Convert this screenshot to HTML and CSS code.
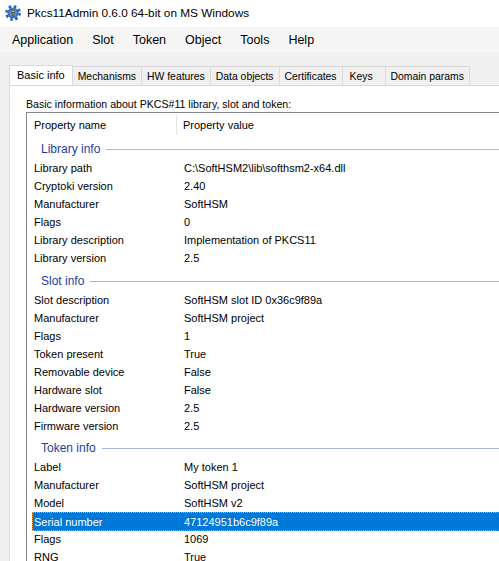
FILE: index.html
```html
<!DOCTYPE html>
<html>
<head>
<meta charset="utf-8">
<title>Pkcs11Admin</title>
<link rel="stylesheet" href="styles.css">
</head>
<body>
<div class="window">
  <div class="titlebar">
    <svg class="app-icon" width="16" height="16" viewBox="0 0 16 16">
      <circle cx="8" cy="8" r="6.4" fill="none" stroke="#2d5fae" stroke-width="3" stroke-dasharray="2.5 2.53"/>
      <circle cx="8" cy="8" r="5.6" fill="#3f74c4"/>
      <circle cx="8" cy="8" r="3.6" fill="#5b8ad6"/>
      <circle cx="8" cy="6.9" r="1.7" fill="#f3d21c" stroke="#222" stroke-width="0.5"/>
      <rect x="7.2" y="7.2" width="1.6" height="3.8" fill="#f3d21c" stroke="#222" stroke-width="0.5"/>
    </svg>
    <span class="title">Pkcs11Admin 0.6.0 64-bit on MS Windows</span>
  </div>
  <div class="menubar">
    <span class="menu-item">Application</span>
    <span class="menu-item">Slot</span>
    <span class="menu-item">Token</span>
    <span class="menu-item">Object</span>
    <span class="menu-item">Tools</span>
    <span class="menu-item">Help</span>
  </div>
  <div class="tabstrip">
    <div class="tab active">Basic info</div>
    <div class="tab">Mechanisms</div>
    <div class="tab">HW features</div>
    <div class="tab">Data objects</div>
    <div class="tab">Certificates</div>
    <div class="tab tab-narrow">Keys</div>
    <div class="tab">Domain params</div>
  </div>
  <div class="page">
    <div class="caption">Basic information about PKCS#11 library, slot and token:</div>
    <div class="listview">
      <div class="lv-header">
        <div class="hcol1">Property name</div>
        <div class="hcol2">Property value</div>
      </div>

      <div class="group"><span class="group-name">Library info</span><span class="group-line"></span></div>
      <div class="row"><span class="c1">Library path</span><span class="c2">C:\SoftHSM2\lib\softhsm2-x64.dll</span></div>
      <div class="row"><span class="c1">Cryptoki version</span><span class="c2">2.40</span></div>
      <div class="row"><span class="c1">Manufacturer</span><span class="c2">SoftHSM</span></div>
      <div class="row"><span class="c1">Flags</span><span class="c2">0</span></div>
      <div class="row"><span class="c1">Library description</span><span class="c2">Implementation of PKCS11</span></div>
      <div class="row"><span class="c1">Library version</span><span class="c2">2.5</span></div>

      <div class="group group-mid"><span class="group-name">Slot info</span><span class="group-line"></span></div>
      <div class="row"><span class="c1">Slot description</span><span class="c2">SoftHSM slot ID 0x36c9f89a</span></div>
      <div class="row"><span class="c1">Manufacturer</span><span class="c2">SoftHSM project</span></div>
      <div class="row"><span class="c1">Flags</span><span class="c2">1</span></div>
      <div class="row"><span class="c1">Token present</span><span class="c2">True</span></div>
      <div class="row"><span class="c1">Removable device</span><span class="c2">False</span></div>
      <div class="row"><span class="c1">Hardware slot</span><span class="c2">False</span></div>
      <div class="row"><span class="c1">Hardware version</span><span class="c2">2.5</span></div>
      <div class="row"><span class="c1">Firmware version</span><span class="c2">2.5</span></div>

      <div class="group"><span class="group-name">Token info</span><span class="group-line"></span></div>
      <div class="row"><span class="c1">Label</span><span class="c2">My token 1</span></div>
      <div class="row"><span class="c1">Manufacturer</span><span class="c2">SoftHSM project</span></div>
      <div class="row"><span class="c1">Model</span><span class="c2">SoftHSM v2</span></div>
      <div class="row selected"><span class="c1">Serial number</span><span class="c2">47124951b6c9f89a</span></div>
      <div class="row"><span class="c1">Flags</span><span class="c2">1069</span></div>
      <div class="row"><span class="c1">RNG</span><span class="c2">True</span></div>
    </div>
  </div>
</div>
</body>
</html>
```

FILE: styles.css
```css
html, body {
  margin: 0;
  padding: 0;
  width: 499px;
  height: 561px;
  overflow: hidden;
  background: #f0f0f0;
}

.window {
  width: 560px;
  height: 561px;
  display: flex;
  flex-direction: column;
  font-family: "Liberation Sans", Arial, sans-serif;
  color: #000;
}

.titlebar {
  height: 27px;
  flex: none;
  background: #fff;
  display: flex;
  align-items: center;
  padding-left: 5px;
  gap: 6px;
}

.app-icon {
  flex: none;
  margin-top: -1px;
}

.title {
  font-size: 11.8px;
  margin-top: -1px;
}

.menubar {
  height: 25px;
  flex: none;
  background: #f5f5f5;
  display: flex;
  align-items: center;
  padding-left: 3px;
  font-size: 12.5px;
}

.menu-item {
  padding: 0 9px 0 9px;
  margin-right: 1px;
}

.tabstrip {
  flex: none;
  display: flex;
  align-items: flex-end;
  padding: 13px 0 0 9px;
  font-size: 10.4px;
}

.tab {
  height: 18px;
  line-height: 19px;
  padding: 0 5px;
  border: 1px solid #d9d9d9;
  border-bottom: none;
  border-left: none;
  background: #f0f0f0;
  white-space: nowrap;
}

.tab-narrow {
  min-width: 29px;
  padding: 0 6px 0 7px;
}

.tab.active {
  height: 20px;
  line-height: 18px;
  background: #fff;
  border-left: 1px solid #d9d9d9;
  padding: 0 7px 0 7px;
  margin-bottom: -1px;
  font-size: 11px;
}

.page {
  flex: 1;
  margin-left: 9px;
  background: #fff;
  border-top: 1px solid #d9d9d9;
  border-left: 1px solid #d9d9d9;
  padding: 12px 0 0 16px;
  font-size: 11px;
}

.caption {
  line-height: 13px;
  height: 13px;
  margin-bottom: 1px;
  white-space: nowrap;
  font-size: 10.6px;
}

.listview {
  border: 1px solid #828790;
  border-right: none;
  background: #fff;
}

.lv-header {
  display: flex;
  height: 22px;
  align-items: stretch;
  margin-bottom: 1px;
}

.hcol1 {
  width: 142px;
  padding-left: 7px;
  border-right: 1px solid #e5e5e5;
  display: flex;
  align-items: center;
  margin-top: 2px;
}

.hcol2 {
  padding-left: 6px;
  display: flex;
  align-items: center;
  margin-top: 2px;
}

.group {
  height: 23px;
  display: flex;
  align-items: center;
  padding: 3px 0 0 14px;
  box-sizing: border-box;
  color: #1e3ea0;
  font-size: 12px;
}

.group-mid {
  height: 24px;
  padding-top: 4px;
}

.group-name {
  white-space: nowrap;
}

.group-line {
  flex: 1;
  height: 1px;
  background: #a6b9e0;
  margin-left: 6px;
  margin-top: 1px;
}

.row {
  height: 18px;
  display: flex;
  align-items: center;
  margin-left: 5px;
  box-sizing: border-box;
  white-space: nowrap;
}

.c1 {
  width: 150px;
  padding-left: 2px;
  flex: none;
}

.c2 {
  flex: 1;
}

.row.selected {
  height: 19px;
  margin-bottom: -1px;
  background: #0078d7;
  color: #fff;
  outline: 1px dotted #f0a040;
  outline-offset: -1px;
}
```
